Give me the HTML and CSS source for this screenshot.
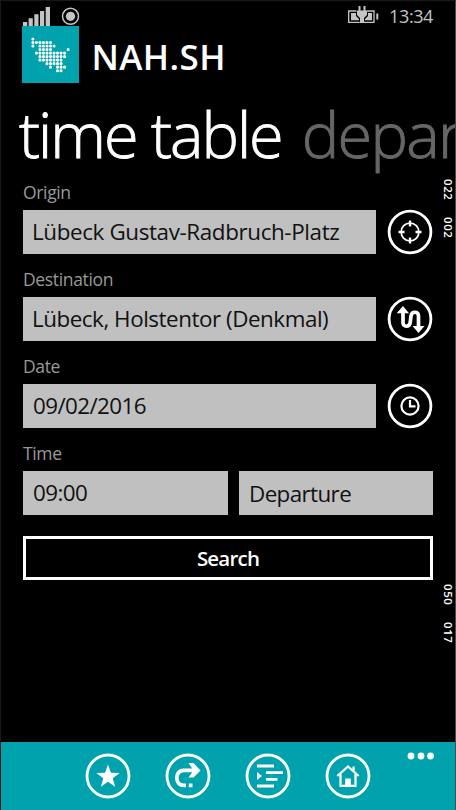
FILE: index.html
```html
<!DOCTYPE html>
<html lang="en">
<head>
<meta charset="utf-8">
<title>NAH.SH</title>
<link rel="stylesheet" href="styles.css">
</head>
<body>
<div class="phone">
  <header class="status">
    <svg class="signal" width="58" height="20" viewBox="0 0 58 20">
      <path fill="#c4c4c4" d="M0 16h4.2v4H0zM5.6 12.200h4.200v7.800H5.600zM11.300 8.300h4.200v11.700h-4.200zM17 5h4.200v15H17zM22.700 1h4.300v19h-4.300z"/>
      <circle cx="47.500" cy="10.300" r="8" fill="none" stroke="#c4c4c4" stroke-width="1.500"/>
      <circle cx="47.500" cy="10.300" r="4.600" fill="#c4c4c4"/>
    </svg>
    <svg class="battery" width="32" height="18" viewBox="0 0 32 18">
      <path fill="none" stroke="#c4c4c4" stroke-width="1.300" d="M8.500 5H.7v11.300h11M19 5h7v11.300H15.500"/>
      <path fill="#c4c4c4" d="M3 7h5v3l3 3v1.300H3zM20 7h4v7.300h-7V13l3-3zM10.500 0h2v4.500h3V0h2v4.500H19V9l-3 3v5h-4v-5L9 9V4.500h1.500zM28.300 7.500h2v6h-2z"/>
    </svg>
    <span class="clock">13:34</span>
  </header>
  <div class="brand">
    <svg class="logo" width="57" height="57" viewBox="0 0 57 57">
      <path fill="#00a3ad" d="M0 0h57v57H0z"/>
      <g transform="translate(10.900 13)">
        <path class="dots" d="M0 0h.01M0 3.520h17.700M0 7.040h.01M7.040 7.040h14.200M7.040 10.560h10.700M35.200 10.560h.01M3.520 14.080h28.300M7.040 17.600h24.800M7.040 21.120h21.200M14.080 24.640h14.200M17.600 28.160h.01M24.640 28.160h7.200M24.640 31.680h3.600"/>
      </g>
    </svg>
    <h1 class="name">NAH.SH</h1>
  </div>
  <nav class="pivot"><span class="tab on">time table</span><span class="tab next">departures</span></nav>
  <main class="form">
    <label class="label">Origin</label>
    <div class="row">
      <div class="field origin">Lübeck Gustav-Radbruch-Platz</div>
      <svg class="ring" viewBox="0 0 46 46">
        <circle cx="23" cy="23" r="20.900" stroke-width="2.800"/>
        <circle cx="23" cy="23" r="8.900" stroke-width="1.700"/>
        <path stroke-width="2.300" d="M23 11.500v6M23 28.500v6M11.500 23h6M28.500 23h6"/>
      </svg>
    </div>
    <label class="label">Destination</label>
    <div class="row">
      <div class="field destination">Lübeck, Holstentor (Denkmal)</div>
      <svg class="ring" viewBox="0 0 46 46">
        <circle cx="23" cy="23" r="20.900" stroke-width="2.800"/>
        <path stroke-width="3.700" d="M16 15v11.500c0 5 6.500 5 7.200 0l.8-6.500c.7-5 7.500-5 7.500 0v11"/>
        <path class="solid" d="M16 10l6 7.200H9.700zM31.500 37l-6-7h12z"/>
      </svg>
    </div>
    <label class="label">Date</label>
    <div class="row">
      <div class="field date">09/02/2016</div>
      <svg class="ring" viewBox="0 0 46 46">
        <circle cx="23" cy="23" r="20.900" stroke-width="2.800"/>
        <circle cx="23" cy="23" r="8.600" stroke-width="2.200"/>
        <path stroke-width="2.200" d="M23 17v6.300h5.500"/>
      </svg>
    </div>
    <label class="label">Time</label>
    <div class="row">
      <div class="field time">09:00</div>
      <div class="field mode">Departure</div>
    </div>
    <button class="search">Search</button>
  </main>
  <footer class="bar">
    <svg class="ring" viewBox="0 0 46 46">
      <circle cx="23" cy="23" r="21" stroke-width="2.800"/>
      <path class="solid" d="M23 11.500l2.900 8.300 8.800.2-7 5.300 2.500 8.500-7.200-5-7.200 5 2.500-8.500-7-5.300 8.800-.2z"/>
    </svg>
    <svg class="ring" viewBox="0 0 46 46">
      <circle cx="23" cy="23" r="21" stroke-width="2.800"/>
      <path stroke-width="3.700" d="M21 32.300h-2.500c-9 0-9-14.900 0-14.900H30"/>
      <path class="solid" d="M23.500 10h5l7 7.400-7 7.100h-5l5-7.100zM23.800 30.500h3.700v3.700h-3.700z"/>
    </svg>
    <svg class="ring" viewBox="0 0 46 46">
      <circle cx="23" cy="23" r="21" stroke-width="2.800"/>
      <path stroke-width="2.800" d="M12 13h17M21 19.700h17M21 26.300h11.500M12 33h17"/>
      <path class="solid" d="M12 19l5 4-5 4z"/>
    </svg>
    <svg class="ring" viewBox="0 0 46 46">
      <circle cx="23" cy="23" r="21" stroke-width="2.800"/>
      <path stroke-width="2.200" d="M12.300 23L23 13.500 33.700 23M15.500 21v11.800h15V21M28.600 18v-4.500"/>
      <path class="solid" d="M20.200 25.500h5.600V33h-5.600z"/>
    </svg>
    <svg class="more" width="28" height="8" viewBox="0 0 28 8"><circle cx="4" cy="4" r="3.400"/><circle cx="14" cy="4" r="3.400"/><circle cx="23.500" cy="4" r="3.400"/></svg>
  </footer>
  <div class="counter top"><span>022</span><span>002</span></div>
  <div class="counter bottom"><span>050</span><span>017</span></div>
</div>
</body>
</html>
```

FILE: styles.css
```css
* { box-sizing: border-box; }
body { margin: 0; background: #000; }
.phone {
  position: relative;
  width: 456px;
  height: 810px;
  overflow: hidden;
  display: flex;
  flex-direction: column;
  background: #000;
  border-top: 1px solid #181818;
  border-left: 1px solid #181818;
  border-right: 1px solid #4a4a4a;
  color: #fff;
  font-family: "Open Sans", "Noto Sans", sans-serif;
  white-space: nowrap;
}
.status { display: flex; height: 25px; padding: 5px 22px 0 22px; }
.battery { margin: 0 9px 0 auto; }
.clock { font-size: 18px; line-height: 20px; color: #c4c4c4; letter-spacing: -0.400px; }
.brand { display: flex; height: 57px; padding-left: 20.500px; }
.logo { flex: none; }
.dots { fill: none; stroke: #fff; stroke-width: 3.100; stroke-linecap: round; stroke-dasharray: 0 3.520; }
.name { margin: 6px 0 0 13px; font-size: 35px; line-height: 50px; font-weight: 600; letter-spacing: 0.400px; }
.pivot { display: flex; height: 96px; padding: 11px 0 0 18px; font-size: 63px; line-height: 80px; font-weight: 300; overflow: hidden; -webkit-text-stroke: 0.900px; }
.tab { flex: none; letter-spacing: -2px; }
.next { margin-left: 20px; color: #666; letter-spacing: -1.700px; }
.form { display: flex; flex-direction: column; padding: 0 22px; }
.label { height: 31px; font-size: 17.500px; line-height: 26px; color: #999; letter-spacing: -0.350px; }
.row { display: flex; height: 44px; margin-bottom: 12px; justify-content: space-between; }
.field { width: 353px; height: 44px; padding-left: 9px; background: #c0c0c0; color: #111; font-size: 22.400px; line-height: 44px; letter-spacing: -0.600px; }
.origin { letter-spacing: -0.370px; }
.destination { letter-spacing: -0.460px; }
.date, .time, .mode { padding-left: 10px; }
.time { width: 205px; }
.mode { width: 194px; line-height: 46px; }
.ring { flex: none; width: 46px; height: 46px; margin: -1px 0 0 0; fill: none; stroke: #fff; }
.solid { fill: #fff; stroke: none; }
.search { height: 44px; margin-top: 9px; border: 3px solid #fff; background: #000; color: #fff; font: 600 20.500px/38px "Open Sans", sans-serif; letter-spacing: -0.800px; padding: 0; }
.bar { position: relative; display: flex; gap: 34px; height: 68px; margin: auto 0 0 -1px; padding: 11px 0 0 85px; background: #00a3ad; }
.bar .ring { margin: 0; }
.more { position: absolute; right: 20px; top: 10px; fill: #fff; }
.counter { position: absolute; right: 0; display: flex; gap: 16px; writing-mode: vertical-rl; font-size: 11.500px; line-height: 14px; font-weight: 600; letter-spacing: 0.600px; }
.top { top: 178px; }
.bottom { top: 583px; }
```
